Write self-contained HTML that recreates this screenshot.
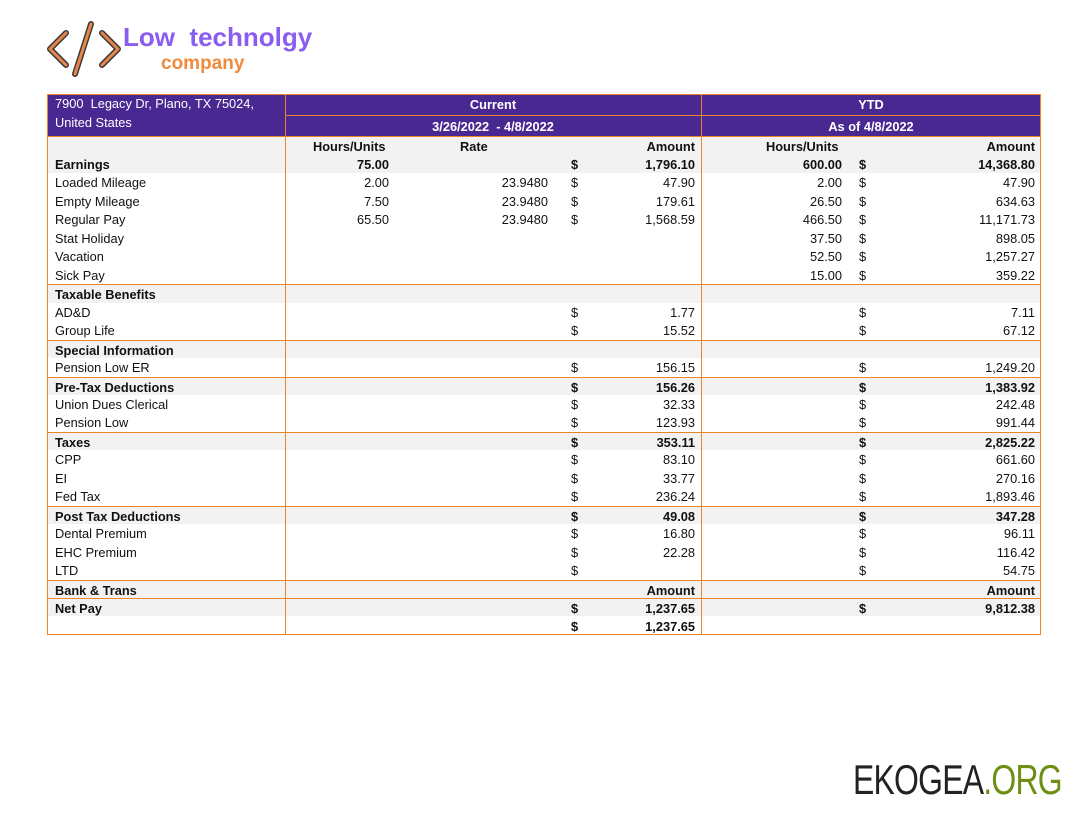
<!DOCTYPE html>
<html><head><meta charset="utf-8"><style>
*{margin:0;padding:0;box-sizing:border-box}
body{width:1075px;height:818px;background:#fff;position:relative;font-family:"Liberation Sans",Arial,sans-serif;font-size:12.8px;color:#111;overflow:hidden}
.a{position:absolute;white-space:nowrap}
.r{position:absolute;left:47px;width:994px;height:18.46px}
.g{background:#f2f2f2}
.t{border-top:1px solid #e8862a}
.r span{position:absolute;top:2px}
.b{font-weight:bold}
.hd{position:absolute;background:#4a2891;color:#fff}
</style></head><body>
<svg class="a" style="left:46px;top:20px" width="76" height="58" viewBox="0 0 76 58">
<g stroke-linecap="round" stroke-linejoin="round" fill="none">
<path d="M20 13 L4 29 L20 45" stroke="#3a3a3a" stroke-width="6"/>
<path d="M20 13 L4 29 L20 45" stroke="#e8854a" stroke-width="3"/>
<path d="M56 13 L72 29 L56 45" stroke="#3a3a3a" stroke-width="6"/>
<path d="M56 13 L72 29 L56 45" stroke="#e8854a" stroke-width="3"/>
<path d="M45 4 L29 54" stroke="#3a3a3a" stroke-width="6"/>
<path d="M45 4 L29 54" stroke="#e8854a" stroke-width="3"/>
</g></svg>
<div class="a" style="left:123px;top:22px;font-size:26px;font-weight:bold;color:#8b5cf0">Low&nbsp; technolgy</div>
<div class="a" style="left:161px;top:53px;font-size:19px;font-weight:bold;color:#f08a3c">company</div>

<div class="hd" style="left:47px;top:94px;width:994px;height:42px"></div>
<div class="a" style="left:285px;top:115px;width:756px;border-top:1px solid #e8862a"></div>
<div class="a" style="left:55px;top:96px;color:#fff">7900&nbsp; Legacy Dr, Plano, TX 75024,</div>
<div class="a" style="left:55px;top:115px;color:#fff">United States</div>
<div class="a b" style="left:285px;width:416px;top:97px;color:#fff;text-align:center">Current</div>
<div class="a b" style="left:285px;width:416px;top:119px;color:#fff;text-align:center">3/26/2022&nbsp; - 4/8/2022</div>
<div class="a b" style="left:701px;width:340px;top:97px;color:#fff;text-align:center">YTD</div>
<div class="a b" style="left:701px;width:340px;top:119px;color:#fff;text-align:center">As of 4/8/2022</div>
<div class="r g t b" style="top:136px;height:19px"><span style="left:266px">Hours/Units</span><span style="left:413px">Rate</span><span style="right:346px">Amount</span><span style="left:719px">Hours/Units</span><span style="right:6px">Amount</span></div>

<div id="rows"></div>
<div class="a" style="left:47px;top:94px;width:994px;height:541px;border:1px solid #e8862a"></div>
<div class="a" style="left:285px;top:94px;height:541px;border-left:1px solid #e8862a"></div>
<div class="a" style="left:701px;top:94px;height:541px;border-left:1px solid #e8862a"></div>
<div class="a" style="left:853px;top:756px;font-size:42px;color:#222;letter-spacing:-1px;transform:scaleX(0.76);transform-origin:left">EKOGEA<span style="color:#6e8f14">.ORG</span></div>
<script>
const R=[
["Earnings","75.00","","$","1,796.10","600.00","$","14,368.80",1,0],
["Loaded Mileage","2.00","23.9480","$","47.90","2.00","$","47.90"],
["Empty Mileage","7.50","23.9480","$","179.61","26.50","$","634.63"],
["Regular Pay","65.50","23.9480","$","1,568.59","466.50","$","11,171.73"],
["Stat Holiday","","","","","37.50","$","898.05"],
["Vacation","","","","","52.50","$","1,257.27"],
["Sick Pay","","","","","15.00","$","359.22"],
["Taxable Benefits","","","","","","","",1,1],
["AD&amp;D","","","$","1.77","","$","7.11"],
["Group Life","","","$","15.52","","$","67.12"],
["Special Information","","","","","","","",1,1],
["Pension Low ER","","","$","156.15","","$","1,249.20"],
["Pre-Tax Deductions","","","$","156.26","","$","1,383.92",1,1],
["Union Dues Clerical","","","$","32.33","","$","242.48"],
["Pension Low","","","$","123.93","","$","991.44"],
["Taxes","","","$","353.11","","$","2,825.22",1,1],
["CPP","","","$","83.10","","$","661.60"],
["EI","","","$","33.77","","$","270.16"],
["Fed Tax","","","$","236.24","","$","1,893.46"],
["Post Tax Deductions","","","$","49.08","","$","347.28",1,1],
["Dental Premium","","","$","16.80","","$","96.11"],
["EHC Premium","","","$","22.28","","$","116.42"],
["LTD","","","$","","","$","54.75"],
["Bank &amp; Trans","","","","Amount","","","Amount",1,1],
["Net Pay","","","$","1,237.65","","$","9,812.38",1,1],
["","","","$","1,237.65","","","",0,0,1]];
let h="";
R.forEach((x,i)=>{const top=155+i*18.46;
let c="r"+(x[8]?" g b":"")+(x[9]?" t":"");
if(x[10])c="r b";
h+=`<div class="${c}" style="top:${top}px"><span style="left:8px">${x[0]}</span><span style="right:652px">${x[1]}</span><span style="right:493px">${x[2]}</span><span style="left:524px">${x[3]}</span><span style="right:346px">${x[4]}</span><span style="right:199px">${x[5]}</span><span style="left:812px">${x[6]}</span><span style="right:6px">${x[7]}</span></div>`;});
document.getElementById("rows").outerHTML=h;
</script>
</body></html>
